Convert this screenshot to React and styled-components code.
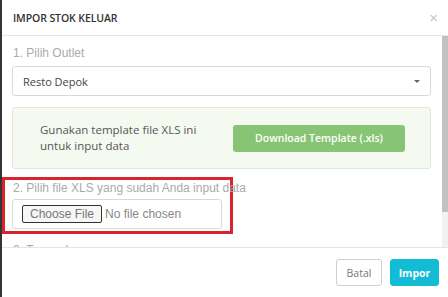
import React from "react";
import styled, { createGlobalStyle } from "styled-components";

const GlobalStyle = createGlobalStyle`
  html, body {
    margin: 0;
    padding: 0;
    background: #333;
    overflow: hidden;
  }
  * { box-sizing: border-box; }
`;

const Screen = styled.div`
  display: flex;
  width: 448px;
  height: 297px;
  background: #333;
`;

const Backdrop = styled.div`
  width: 2px;
  flex: none;
`;

const Modal = styled.div`
  flex: 1;
  display: flex;
  flex-direction: column;
  background: #fff;
  font-family: "Open Sans", "Liberation Sans", sans-serif;
`;

const Header = styled.div`
  height: 36px;
  flex: none;
  display: flex;
  align-items: center;
  justify-content: space-between;
  padding: 0 10px 0 11px;
  border-bottom: 1px solid #e5e5e5;
`;

const Title = styled.h4`
  margin: 0;
  font-size: 10.5px;
  font-weight: 600;
  color: #333;
  letter-spacing: -0.1px;
`;

const Close = styled.span`
  color: #c4c4c4;
  font-size: 15px;
  line-height: 1;
  font-family: "Liberation Sans", sans-serif;
`;

const Body = styled.div`
  flex: 1;
  min-height: 0;
  display: flex;
  overflow: hidden;
`;

const Content = styled.div`
  flex: 1;
  min-width: 0;
  padding: 9px 11px 0 0;
  display: flex;
  flex-direction: column;
`;

const Scrollbar = styled.div`
  width: 6px;
  flex: none;
  background: #f1f1f1;
`;

const Thumb = styled.div`
  height: 176px;
  background: #c1c1c1;
`;

const Group = styled.div`
  padding-left: 10px;
  margin-top: ${p => p.$top || 0}px;
  flex: none;
`;

const Label = styled.div`
  font-family: "Liberation Sans", Arial, sans-serif;
  font-size: 12px;
  color: #aaa;
  line-height: 16px;
  margin-bottom: ${p => p.$gap || 5}px;
  margin-left: 1px;
  white-space: nowrap;
`;

const Select = styled.div`
  height: 30px;
  border: 1px solid #d9d9d9;
  border-radius: 3px;
  display: flex;
  align-items: center;
  justify-content: space-between;
  padding: 0 10px 0 10px;
  font-size: 11px;
  color: #444;
`;

const Caret = styled.span`
  width: 0;
  height: 0;
  border-left: 3px solid transparent;
  border-right: 3px solid transparent;
  border-top: 3px solid #666;
`;

const TemplateBox = styled.div`
  display: flex;
  align-items: center;
  justify-content: space-between;
  height: 62px;
  margin-top: 11px;
  padding: 0 25px 0 27px;
  background: #f5faf1;
  border: 1px solid #dfe9d9;
  border-radius: 3px;
`;

const Hint = styled.div`
  font-size: 11.5px;
  line-height: 16px;
  color: #555;
  width: 160px;
`;

const GreenButton = styled.button`
  width: 172px;
  height: 27px;
  border: none;
  border-radius: 3px;
  background: #87c574;
  color: #fff;
  font-family: inherit;
  font-size: 10.5px;
  font-weight: 600;
`;

const Highlight = styled.div`
  width: 231px;
  margin-top: 8px;
  padding: 0 0 2px 7px;
  border: 3px solid #d9232d;
  flex: none;
`;

const FileBox = styled.div`
  width: 210px;
  height: 30px;
  border: 1px solid #d9d9d9;
  border-radius: 3px;
  display: flex;
  align-items: center;
  padding: 0 9px;
  font-family: "Liberation Sans", Arial, sans-serif;
  font-size: 12px;
  color: #888;
`;

const ChooseButton = styled.span`
  display: inline-block;
  padding: 1px 7px;
  border: 1px solid #333;
  border-radius: 2px;
  background: #f6f6f6;
  color: #777;
  margin-right: 3px;
  line-height: 14px;
`;

const DateBox = styled.div`
  height: 30px;
  border: 1px solid #d9d9d9;
  border-radius: 3px;
`;

const Footer = styled.div`
  height: 50px;
  flex: none;
  border-top: 1px solid #e5e5e5;
  display: flex;
  align-items: center;
  justify-content: flex-end;
  gap: 8px;
  padding: 0 9px 0 0;
`;

const Button = styled.button`
  width: ${p => (p.$primary ? 49 : 46)}px;
  height: 27px;
  padding: 0;
  border-radius: 3px;
  border: 1px solid ${p => (p.$primary ? "#12bcd4" : "#d0d0d0")};
  background: ${p => (p.$primary ? "#12bcd4" : "#fff")};
  color: ${p => (p.$primary ? "#fff" : "#777")};
  font-family: inherit;
  font-size: 10.5px;
  font-weight: ${p => (p.$primary ? 700 : 400)};
`;

const App = () => {
  return (
    <Screen>
      <GlobalStyle />
      <Backdrop />
      <Modal>
        <Header>
          <Title>IMPOR STOK KELUAR</Title>
          <Close>×</Close>
        </Header>
        <Body>
          <Content>
            <Group>
              <Label>1. Pilih Outlet</Label>
              <Select>
                Resto Depok
                <Caret />
              </Select>
              <TemplateBox>
                <Hint>Gunakan template file XLS ini untuk input data</Hint>
                <GreenButton>Download Template (.xls)</GreenButton>
              </TemplateBox>
            </Group>
            <Highlight>
              <Label $gap={3}>2. Pilih file XLS yang sudah Anda input data</Label>
              <FileBox>
                <ChooseButton>Choose File</ChooseButton>
                No file chosen
              </FileBox>
            </Highlight>
            <Group $top={8}>
              <Label>3. Tanggal</Label>
              <DateBox />
            </Group>
          </Content>
          <Scrollbar>
            <Thumb />
          </Scrollbar>
        </Body>
        <Footer>
          <Button>Batal</Button>
          <Button $primary>Impor</Button>
        </Footer>
      </Modal>
    </Screen>
  );
};

export default App;
